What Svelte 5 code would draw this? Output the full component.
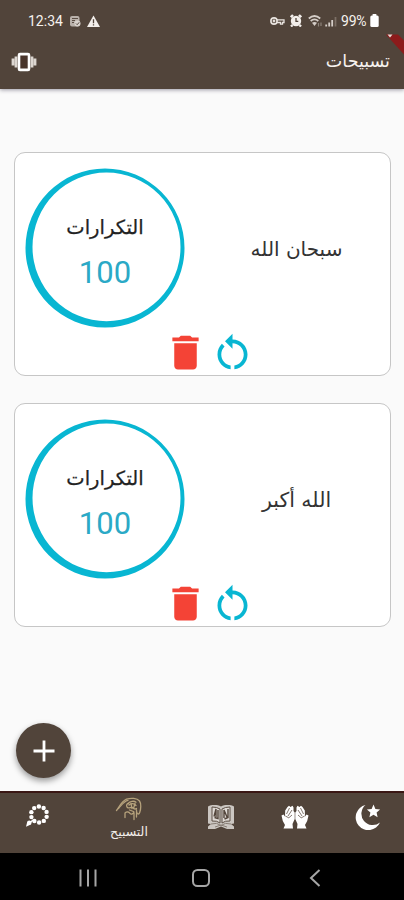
<script lang="ts">
  interface Dhikr {
    id: number;
    text: string;
    count: number;
    kind: string;
  }

  let items = $state<Dhikr[]>([
    { id: 1, text: "سبحان الله", count: 100, kind: "subhan" },
    { id: 2, text: "الله أكبر", count: 100, kind: "akbar" },
  ]);

  // misbaha beads, evenly placed around the loop
  const beads = Array.from({ length: 10 }, (_, i) => {
    const a = (i / 10) * Math.PI * 2 + 0.3;
    return { x: 14 + Math.cos(a) * 8, y: 10.5 + Math.sin(a) * 8 };
  });

  function remove(id: number) {
    items = items.filter((d) => d.id !== id);
  }

  function reset(item: Dhikr) {
    item.count = 100;
  }
</script>

<div class="screen">
  <header>
    <div class="status">
      <span class="clock">12:34</span>
      <svg class="s-note" width="12" height="12" viewBox="0 0 12 12">
        <rect x="1" y="1" width="9.5" height="10.5" rx="2" fill="#b9b1aa" />
        <path d="M3 3.5h6M3 5.5h3M3 7.5h2" stroke="#5a4d43" />
        <circle cx="8.5" cy="8.5" r="3" fill="#d9d3cd" />
        <path d="M7 8.5l1.2 1.2 2-2.4" stroke="#51443a" fill="none" />
      </svg>
      <svg class="s-warn" width="13" height="12" viewBox="0 0 13 12">
        <path d="M6.5.5L13 12H0z" fill="#f3efeb" />
        <path d="M6.5 4.2v4M6.5 9.2v1.3" stroke="#51443a" stroke-width="1.3" />
      </svg>
      <span class="grow"></span>
      <svg width="15" height="12" viewBox="0 0 15 12" fill="none" stroke="#e9e4df" stroke-width="1.6">
        <circle cx="4" cy="6" r="3.1" />
        <circle cx="4" cy="6" r=".6" />
        <path d="M7 4.8h7v2.7h-1.5v1.6h-2V7.5H7" stroke-width="1.3" />
      </svg>
      <svg class="s-alarm" width="12" height="13" viewBox="0 0 12 13">
        <circle cx="6" cy="7" r="5.2" fill="#f3efeb" />
        <path d="M.8 3.2L3 1M11.2 3.2L9 1M2.5 11L1 12.5M9.5 11l1.5 1.5" stroke="#f3efeb" stroke-width="2.4" />
        <path d="M6 4v3.3h2.3" stroke="#51443a" stroke-width="1.3" fill="none" />
      </svg>
      <svg class="s-wifi" width="15" height="12" viewBox="0 0 15 12" fill="none" stroke="#d5cec8" stroke-width="1.8">
        <path d="M.8 3.5Q6.5-1.5 12.2 3.5M2.7 6q3.8-3.2 7.6 0" />
        <path d="M6.5 11L4 7.8q2.5-1.8 5 0z" fill="#d5cec8" stroke="none" />
        <path d="M10.5 8v3.5M13 7.5V11" stroke="#8d837a" stroke-width="1.2" />
      </svg>
      <svg class="s-signal" width="12" height="12" viewBox="0 0 12 12">
        <path d="M1.2 11.5v-2M4.2 11.5v-4M7.2 11.5V5" stroke="#d5cec8" stroke-width="1.8" />
        <path d="M10.5 11.5V2" stroke="#7b6f65" stroke-width="1.8" />
      </svg>
      <span class="percent">99%</span>
      <svg width="9" height="13" viewBox="0 0 9 13" fill="#fff">
        <rect x="0.3" y="1.5" width="8.4" height="11.5" rx="1.5" />
        <rect x="2.6" y="0" width="3.8" height="3" rx=".6" />
      </svg>
    </div>

    <div class="appbar">
      <button aria-label="اهتزاز">
        <svg width="26" height="20" viewBox="0 0 26 20">
          <path d="M2 6.5v7M5 4.5v11M24 6.5v7M21 4.5v11" stroke="#ddd7d1" stroke-width="2.8" />
          <rect x="8" y="2.1" width="10" height="15.8" rx="1" fill="#49352b" stroke="#fff" stroke-width="2.6" />
        </svg>
      </button>
      <h1>تسبيحات</h1>
    </div>

    <svg class="banner" width="20" height="22" viewBox="0 0 20 22">
      <path d="M2 .5H14L20 6.500V20.500z" fill="#8c1b1b" />
      <path d="M3.500.500h5L6 3.500z" fill="#e8ddd7" />
    </svg>
  </header>

  <main>
    {#each items as item (item.id)}
      <article>
        <div class="content">
          <div class="counter">
            <svg class="ring" viewBox="0 0 160 160">
              <path
                fill="#08b6d2"
                fill-rule="evenodd"
                d="M.5 80a79.500 79.500 0 1 0 159 0a79.500 79.500 0 1 0-159 0zM7.500 78.900a74 74.300 0 1 0 148 0a74 74.300 0 1 0-148 0z"
              />
            </svg>
            <span class="label">التكرارات</span>
            <span class="count">{item.count}</span>
          </div>
          <div class="phrase"><span class={item.kind}>{item.text}</span></div>
        </div>
        <div class="actions">
          <button aria-label="حذف" onclick={() => remove(item.id)}>
            <svg width="45" height="45" viewBox="0 0 24 24" fill="#f44336">
              <path d="M6 19c0 1.1.9 2 2 2h8c1.1 0 2-.9 2-2V7H6v12zM19 4h-3.5l-1-1h-5l-1 1H5v2h14V4z" />
            </svg>
          </button>
          <button aria-label="إعادة" onclick={() => reset(item)}>
            <svg width="45" height="45" viewBox="0 0 24 24" fill="#08b6d2">
              <path d="M12 5V2L8 6l4 4V7c3.31 0 6 2.69 6 6 0 2.97-2.17 5.43-5 5.91v2.02c3.95-.49 7-3.85 7-7.93 0-4.42-3.58-8-8-8z" />
              <path d="M6 13c0-1.65.67-3.15 1.76-4.24L6.34 7.34C4.9 8.79 4 10.79 4 13c0 4.08 3.05 7.44 7 7.93v-2.02c-2.83-.48-5-2.94-5-5.91z" />
            </svg>
          </button>
        </div>
      </article>
    {/each}
  </main>

  <div class="fab-row">
    <button class="fab" aria-label="إضافة">
      <svg width="22" height="22" viewBox="0 0 22 22">
        <path d="M11 .5v21M.5 11h21" stroke="#fff" stroke-width="2.8" />
      </svg>
    </button>
  </div>

  <nav>
    <a href="#misbaha" aria-label="المسبحة">
      <svg width="24" height="24" viewBox="0 0 24 24" fill="#fff">
        {#each beads as b}
          <circle cx={b.x} cy={b.y} r="2.2" />
        {/each}
        <path d="M8 16L4.5 19" stroke="#fff" stroke-width="1.5" />
        <circle cx="4.3" cy="18.8" r="2.3" />
        <path d="M2.2 18L1 22.800l4.800-2.300z" />
      </svg>
    </a>
    <a class="selected" href="#tasbih">
      <svg width="28" height="24" viewBox="0 0 28 24" fill="none" stroke="#b6a27c" stroke-width="1.3" stroke-linecap="round">
        <path d="M1.5 13.5C4 10 7 4 11.5 2.2 16 .8 22 1 24.5 4c1.800 2.500 1.500 8 .2 11.500-.9 2.500-3 1.500-3-.5" />
        <path d="M3.5 11.5C7 7.5 9 4 13 3.3M13 6.5c2-2.3 6-3 8-1.3M12 10c-1-2 0-3.5 1.5-3.5M14 8c2-2 5-1.8 7 .5" />
        <path d="M12.5 10.5c1.5 1.5 3.5-1 5 0s2 2.500 4 1M10 16v4.500M10 16c2-1.800 4-1 5 .3s3 1 4-1.300M19 16v6.500M21.500 13v7" />
        <path d="M16 6.5l1 5M20 6.5l-1.5 5M14.5 13l4 1.5" />
      </svg>
      <span>التسبيح</span>
    </a>
    <a href="#quran" aria-label="القرآن">
      <svg width="28" height="26" viewBox="0 0 28 26">
        <path d="M1 2.500L3 1.500C7 .7 11 .9 14 2.500 17 .9 21 .7 25 1.500l2 1v17l-3 .5 3 2.500V25h-7l-6-2.500L8 25H1v-2.500L4 20l-3-.5z" fill="#cbc6c1" />
        <path d="M5 3v14q5-.5 8 2V5Q10 3 5 3zM23 3v14q-5-.5-8 2V5q3-2 8-2z" fill="#ded9d4" stroke="#5d5046" />
        <path d="M7 12.500L9 5v8M11 6v8.500l-3.500-1M17 14V6l3 7M21 5v8.500l-3.500 1.500" stroke="#53463c" stroke-width="1.4" fill="none" />
        <path d="M4 20q6-2 10 1.500Q18 18 24 20M8 23l6-2 6 2" stroke="#887e75" fill="none" />
      </svg>
    </a>
    <a href="#duaa" aria-label="الأدعية">
      <svg width="28" height="26" viewBox="0 0 28 26">
        <g id="palm">
          <path d="M2.500 24.500L4 21 1.800 17 .5 11.500 2.500 10.500 4 12.500 4.200 6.500 6.500 3 8 1.800 9.500 3 11.500 1.800 12.500 3.500V7l1.200 1.500V15l-2.200 5 .5 4.500z" fill="#fff" />
          <path d="M5.5 10L8.5 4M7 12L11 6M4.300 12l3.500 1.800 3.200-2.800" stroke="#75675c" stroke-width=".9" fill="none" />
        </g>
        <use href="#palm" transform="matrix(-1 0 0 1 28 0)" />
      </svg>
    </a>
    <a href="#adhkar" aria-label="الأذكار">
      <svg width="28" height="28" viewBox="0 0 28 28" fill="#fff">
        <path d="M11.500 1A12.700 12.700 0 1 0 26 18.500A10.300 10.300 0 1 1 11.500 1z" />
        <path d="M19.500.6l1.900 4.300 4.700.5-3.500 3.200 1 4.600-4.100-2.400-4.100 2.400 1-4.600-3.500-3.200 4.700-.5z" />
      </svg>
    </a>
  </nav>

  <footer>
    <svg width="18" height="20" viewBox="0 0 18 20">
      <path d="M1.5 1.5v17M9 1.5v17M16.5 1.5v17" stroke="#a6a6a6" stroke-width="2" />
    </svg>
    <svg width="20" height="20" viewBox="0 0 20 20">
      <rect x="2" y="2" width="16" height="16" rx="4.5" fill="none" stroke="#a6a6a6" stroke-width="2" />
    </svg>
    <svg class="back" width="12" height="20" viewBox="0 0 12 20">
      <path d="M10.5 2L2 10l8.500 8" fill="none" stroke="#a6a6a6" stroke-width="2" />
    </svg>
  </footer>
</div>

<style>
  :global(body) {
    margin: 0;
  }

  .screen {
    display: flex;
    flex-direction: column;
    width: 404px;
    height: 900px;
    overflow: hidden;
    background: #fafafa;
    font-family: Roboto, "DejaVu Sans", sans-serif;
  }

  button {
    display: flex;
    padding: 0;
    border: none;
    background: none;
  }
  svg {
    display: block;
    flex: none;
  }

  header {
    position: relative;
    height: 89px;
    flex: none;
    background: #51443a;
    color: #f6f2ee;
    box-shadow: 0 1px 4px rgba(40, 35, 60, 0.45);
  }
  .status {
    display: flex;
    align-items: center;
    height: 41px;
    box-sizing: border-box;
    padding: 0 25px 0 28px;
    font-size: 14px;
  }
  .clock {
    width: 36px;
  }
  .s-note {
    margin-left: 5px;
  }
  .s-warn {
    margin-left: 6px;
  }
  .grow {
    flex: 1;
  }
  .s-alarm {
    margin-left: 5px;
  }
  .s-wifi {
    margin-left: 6px;
  }
  .s-signal {
    margin-left: 2px;
  }
  .percent {
    width: 29px;
    margin-left: 4px;
    letter-spacing: -0.2px;
  }
  .appbar {
    display: flex;
    align-items: center;
    justify-content: space-between;
    height: 42px;
    padding: 0 14px 0 11px;
  }
  h1 {
    margin: 0 0 3px;
    font-size: 17.5px;
    font-weight: 400;
  }
  .banner {
    position: absolute;
    top: 34px;
    right: 0;
  }

  main {
    display: flex;
    flex-direction: column;
    gap: 27px;
    padding: 63px 13px 0 14px;
  }
  article {
    height: 224px;
    box-sizing: border-box;
    padding-top: 15px;
    border: 1.5px solid #c6c6c6;
    border-radius: 11px;
    background: #fff;
  }
  .content {
    display: flex;
    height: 162px;
    padding-left: 10px;
  }
  .counter {
    display: grid;
    grid-template-rows: 78px 49px;
    justify-items: center;
    align-items: end;
    width: 160px;
    height: 160px;
  }
  .ring {
    grid-area: 1 / 1 / 3 / 2;
    width: 160px;
    height: 160px;
    align-self: start;
    margin-bottom: -33px;
  }
  .label {
    grid-area: 1 / 1;
    font-size: 19.5px;
    line-height: 36px;
    color: #222;
    -webkit-text-stroke: 0.25px #222;
  }
  .count {
    grid-area: 2 / 1;
    font-size: 31px;
    line-height: 44px;
    color: #2ba9c6;
  }
  .phrase {
    display: flex;
    flex: 1;
    align-items: center;
    justify-content: center;
    padding-left: 18px;
    font-family: "DejaVu Sans", sans-serif;
    font-size: 20px;
    color: #333;
  }
  .akbar {
    font-size: 20.5px;
  }
  .actions {
    display: flex;
    justify-content: center;
    gap: 2px;
    margin-left: 13px;
  }

  .fab-row {
    flex: 1;
    display: flex;
    align-items: flex-end;
    padding: 0 16px 13px;
  }
  .fab {
    align-items: center;
    justify-content: center;
    width: 55px;
    height: 55px;
    border-radius: 50%;
    background: #51443a;
    box-shadow: 0 3px 6px rgba(0, 0, 0, 0.4);
  }

  nav {
    display: grid;
    grid-template-columns: 74px 110px 74px 73px 73px;
    height: 60px;
    flex: none;
    border-top: 2px solid #3a1714;
    background: #51443a;
  }
  nav a {
    display: flex;
    flex-direction: column;
    align-items: center;
    padding-top: 11px;
    color: #f3efeb;
    text-decoration: none;
  }
  nav a.selected {
    padding-top: 4px;
  }
  nav span {
    font-size: 12.5px;
    line-height: 18px;
    margin-top: 2px;
  }

  footer {
    display: flex;
    align-items: center;
    height: 47px;
    flex: none;
    box-sizing: border-box;
    padding: 2px 0 0 79px;
    gap: 94px;
    background: #000;
  }
  .back {
    margin-left: 4px;
  }
</style>
